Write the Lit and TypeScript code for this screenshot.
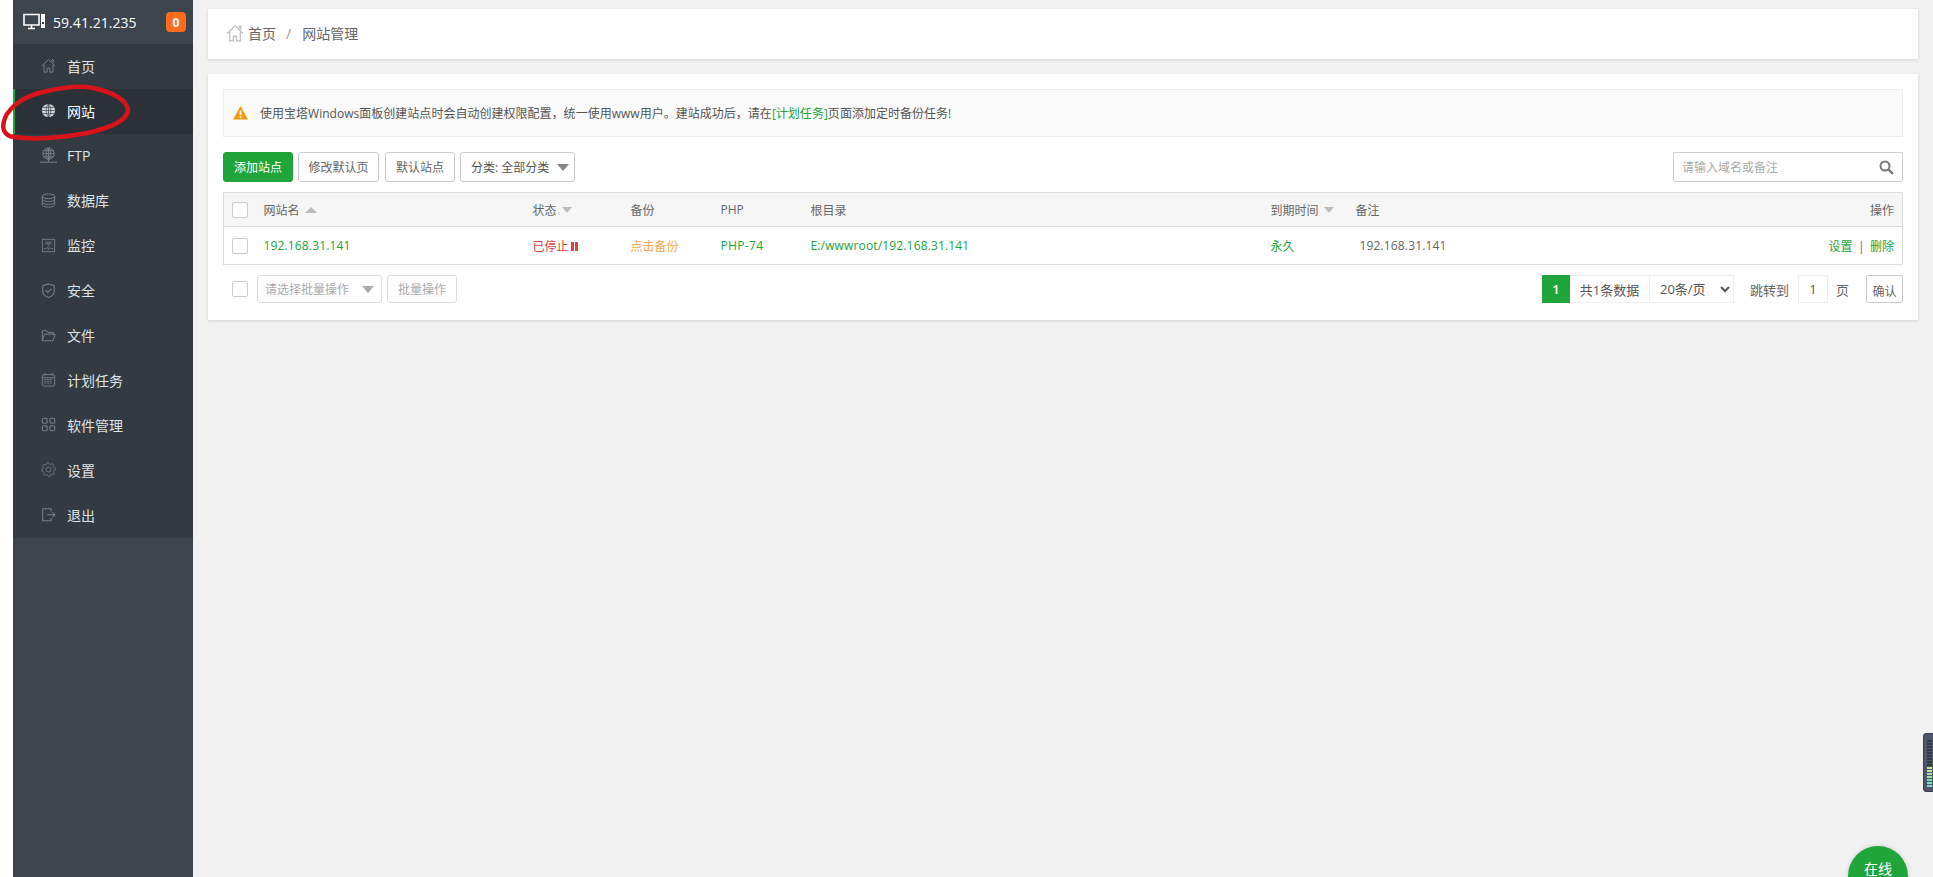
import { LitElement, html, css, svg } from "lit";
import { customElement } from "lit/decorators.js";

const gearPath = (() => {
  const pts: string[] = [];
  const teeth = 8;
  for (let i = 0; i < teeth * 4; i++) {
    const a = (i / (teeth * 4)) * Math.PI * 2 - Math.PI / 16;
    const r = i % 4 < 2 ? 8 : 6.2;
    pts.push(`${(8.5 + r * Math.cos(a)).toFixed(2)} ${(8.5 + r * Math.sin(a)).toFixed(2)}`);
  }
  return "M" + pts.join("L") + "Z";
})();

const icons: Record<string, unknown> = {
  home: svg`<path d="M1 9 8.5 1.8 16 9M3.5 7.5V16H7v-4.5h3V16h3.5V7.5M12.5 4V2H14v3.5" fill="none" stroke="currentColor" stroke-width="1.1"/>`,
  globe: svg`<circle cx="8.5" cy="8.5" r="7.5" fill="#cfd2d6"/><path d="M1 8.5h15M2 5h13M2 12h13M8.5 1v15M8.5 1C5 4 5 13 8.5 16M8.5 1C12 4 12 13 8.5 16" fill="none" stroke="#2c3138" stroke-width=".7"/>`,
  ftp: svg`<circle cx="8.5" cy="6.7" r="5.7" fill="none" stroke="currentColor"/><path d="M3 6.700h11M3.500 3.700h10M3.500 9.700h10M8.500 1v11.400M8.500 1C5.500 3.200 5.500 10.200 8.500 12.400M8.500 1C11.500 3.200 11.500 10.200 8.500 12.400M8.500 12.400v2.400M0 15.200h17" fill="none" stroke="currentColor" stroke-width="1"/>`,
  db: svg`<ellipse cx="8.500" cy="3.700" rx="7" ry="2.700" fill="none" stroke="currentColor" stroke-width="1.100"/><path d="M1.500 3.700v9.600c0 1.500 3.100 2.700 7 2.700s7-1.200 7-2.700V3.700M1.500 7c0 1.500 3.100 2.700 7 2.700s7-1.200 7-2.700M1.500 10.200c0 1.500 3.100 2.700 7 2.700s7-1.200 7-2.700" fill="none" stroke="currentColor" stroke-width="1.100"/>`,
  monitor: svg`<rect x="1.500" y="1.500" width="14" height="14" fill="none" stroke="currentColor"/><path d="M3 12h3l1.200-1.500 1.300 2.500 1.300-2.500 1 1.500h3.200" fill="none" stroke="currentColor" stroke-width=".9"/><rect x="5" y="4" width="7" height="3.500" fill="currentColor" opacity=".55"/><path d="M8.500 7.500v2" stroke="currentColor" stroke-width=".8"/>`,
  shield: svg`<path d="M8.500 1 15 3v6.500c0 3.500-3.500 5.800-6.500 6.800C5.500 15.300 2 13 2 9.500V3Z" fill="none" stroke="currentColor" stroke-width="1.200"/><path d="m5.200 8.200 2.500 2.500 4-4" fill="none" stroke="currentColor" stroke-width="1.200"/>`,
  folder: svg`<path d="M1.500 14.500V3h5l1.500 2h6v2M1.500 14.500 4 7h12l-2.500 7.500Z" fill="none" stroke="currentColor" stroke-width="1.100"/>`,
  calendar: svg`<rect x="1.500" y="3" width="14" height="13" rx="1.500" fill="none" stroke="currentColor" stroke-width="1.100"/><path d="M1.500 6.500h14M4.500 1v3M12.500 1v3" fill="none" stroke="currentColor" stroke-width="1.100"/><path d="M4 8.500h9M4 10.500h9M4 12.500h9" fill="none" stroke="currentColor" stroke-width="1.100" stroke-dasharray="2 1"/>`,
  grid: svg`<g fill="none" stroke="currentColor" stroke-width="1.200"><rect x="1.500" y="1.500" width="5.500" height="5.500" rx="1.200"/><rect x="10" y="1.500" width="5.500" height="5.500" rx="1.200"/><rect x="1.500" y="10" width="5.500" height="5.500" rx="1.200"/><rect x="10" y="10" width="5.500" height="5.500" rx="1.200"/></g>`,
  gear: svg`<circle cx="8.500" cy="8.500" r="2.800" fill="none" stroke="currentColor" stroke-width=".9"/><path d="${gearPath}" fill="none" stroke="currentColor" stroke-width=".9"/>`,
  exit: svg`<path d="M11.500 5V2H2v13.500h9.500v-3M7 8.700h8.500M13 6.200l2.700 2.500L13 11.200" fill="none" stroke="currentColor" stroke-width="1.200"/>`,
};

const menu = [
  ["home", "首页"], ["globe", "网站"], ["ftp", "FTP"], ["db", "数据库"], ["monitor", "监控"], ["shield", "安全"],
  ["folder", "文件"], ["calendar", "计划任务"], ["grid", "软件管理"], ["gear", "设置"], ["exit", "退出"],
];

const meterBars = Array.from({ length: 16 }, (_, i) =>
  i < 9 ? "#333a46" : i < 11 ? "#c6e58a" : i < 13 ? "#a4e6a0" : "#78e0c0");

@customElement("app-root")
export class AppRoot extends LitElement {
  static styles = css`
    :host { display: block; height: 877px; overflow: hidden; position: relative; background: #f1f1f1;
      font-family: "Open Sans", "Noto Sans CJK SC", sans-serif; font-size: 12px; color: #666; }
    * { box-sizing: border-box; }
    .page { display: flex; height: 877px; }
    .strip { width: 13px; background: #fff; flex: none; }
    .side { width: 180px; flex: none; background: #3c444d; display: flex; flex-direction: column; }
    .top { height: 44px; display: flex; align-items: center; padding: 0 7px 0 10px; color: #fff; font-size: 14px; }
    .top svg { margin-right: 8px; flex: none; }
    .top .ip { flex: 1; letter-spacing: .05px; }
    .badge { width: 20px; height: 20px; border-radius: 4px; background: #fb6b20; color: #fff; font-weight: 700;
      font-size: 12px; display: flex; align-items: center; justify-content: center; }
    .menu { background: #333a42; display: flex; flex-direction: column; }
    .item { height: 44.9px; display: flex; align-items: center; padding: 0 0 1.5px 28px; color: #dfe3e7; font-size: 14px; gap: 11px; }
    .item svg { color: #7a7f85; flex: none; }
    .item svg.wide { width: 17px; height: 17px; margin: 0 -1px; }
    .item.on { background: #2c3138; color: #fff; box-shadow: inset 2px 0 0 #20a53a; }
    .main { flex: 1; min-width: 0; padding: 9px 15px 0; }
    .card { background: #fff; box-shadow: 0 1px 3px rgba(0,0,0,.12); }
    .crumb { height: 50px; display: flex; align-items: center; padding: 0 0 2px 18px; font-size: 14px; color: #666; }
    .crumb svg { color: #bbb; margin-right: 4px; }
    .crumb .sep { margin: 0 11px 0 10px; color: #999; }
    .panel { margin-top: 15px; padding: 15px 15px 17px; }
    .alert { height: 48px; background: #fafafa; border: 1px solid #eee; display: flex; align-items: center;
      padding: 0 0 1px 9px; color: #555; gap: 12px; letter-spacing: .02px; }
    .alert a { color: #20a53a; }
    .bar { display: flex; align-items: center; gap: 5px; margin-top: 15px; height: 30px; }
    .btn { height: 100%; padding: 0 10px; border: 1px solid #ccc; border-radius: 3px; display: flex; align-items: center;
      background: #fff; color: #666; white-space: nowrap; }
    .btn.green { background: #20a53a; border-color: #20a53a; color: #fff; width: 70px; justify-content: center; padding: 0; }
    .btn.w2 { width: 81px; justify-content: center; padding: 0; }
    .btn.w3 { width: 70px; justify-content: center; padding: 0; margin-left: 1px; }
    .btn.drop { width: 115px; gap: 8px; padding: 0 0 0 10px; color: #555; }
    .tri { width: 0; height: 0; border-left: 6px solid transparent; border-right: 6px solid transparent; border-top: 7px solid #888; display: inline-block; }
    .tri.up { border-top: 0; border-bottom: 6px solid #bbb; }
    .tri.dn { border-top: 6px solid #bbb; border-left-width: 5.500px; border-right-width: 5.500px; }
    .search { margin-left: auto; width: 230px; height: 100%; border: 1px solid #ccc; border-radius: 2px; display: flex;
      align-items: center; justify-content: space-between; padding: 0 8px; color: #aaa; }
    .search svg { color: #777; }
    table { width: 100%; table-layout: fixed; border-collapse: collapse; margin-top: 10px; border: 1px solid #ddd; }
    th { height: 34px; background: #f6f6f6; font-weight: 400; text-align: left; color: #666; border-bottom: 1px solid #ddd; padding: 0 0 0 10px; }
    th.nt { padding-left: 11px; }
    td { height: 38px; padding: 0 0 0 10px; color: #20a53a; }
    td.latin { letter-spacing: .15px; }
    td.php { letter-spacing: .35px; }
    th.cb, td.cb { padding-left: 8px; }
    th .tri { margin-left: 5px; vertical-align: 2px; }
    .right { float: right; margin-right: 8px; }
    .acts { color: #20a53a; letter-spacing: 0; }
    .acts span { color: #666; margin: 0 5.500px; }
    td.stop { color: #e04040; }
    td.stop i { display: inline-block; width: 3px; height: 9px; background: #e04040; margin-left: 1px; }
    td.stop i:first-of-type { margin-left: 2px; }
    td.bak { color: #f5a64d; }
    td.note { color: #666; padding-left: 15px; }
    .check { width: 16px; height: 16px; border: 1px solid #ccc; border-radius: 2px; background: #fff; display: block; }
    .foot { margin-top: 10px; height: 28px; display: flex; align-items: center; }
    .foot .check { margin: 0 9px; flex: none; }
    .foot .btn { color: #aaa; border-color: #ddd; }
    .batch { width: 125px; padding: 0 7px 0 7px; justify-content: space-between; }
    .foot .btn.bbtn { width: 70px; justify-content: center; padding: 0; margin-left: 5px; }
    .foot .tri { border-top-color: #aaa; }
    .pager { margin-left: auto; display: flex; align-items: center; height: 100%; font-size: 13px; }
    .pg { height: 100%; display: flex; align-items: center; justify-content: center; border: 1px solid #eee; color: #555; }
    .pg.cur { width: 28px; background: #20a53a; border-color: #20a53a; color: #fff; font-weight: 600; }
    .pg.count { width: 80px; border-left: 0; }
    select { width: 84px; height: 100%; border: 1px solid #eee; border-left: 0; background: #fff; color: #555;
      font: inherit; padding: 0 0 0 6px; outline: none; border-radius: 0; }
    .lbl { color: #666; margin: 0 9px 0 16px; }
    .pg.inp { width: 30px; }
    .lbl2 { color: #666; margin: 0 17px 0 8px; }
    .ok { width: 37px; height: 100%; border: 1px solid #ccc; border-radius: 2px; display: flex; align-items: center;
      justify-content: center; padding-top: 3px; color: #666; font-size: 12px; }
    .ring { position: absolute; left: 0; top: 0; pointer-events: none; }
    .meter { position: absolute; left: 1923px; top: 733px; width: 14px; height: 59px; background: #50566a; border: 1px solid #3a3f4c;
      border-radius: 3px; display: flex; flex-direction: column; gap: 1px; padding: 6px 0 0 3px; }
    .meter i { display: block; width: 5px; height: 2px; }
    .online { position: absolute; left: 1848px; top: 846px; width: 60px; height: 60px; border-radius: 50%; background: #20a53a;
      color: #fff; font-size: 14px; text-align: center; padding-top: 13px; line-height: 20px; box-shadow: 0 0 5px rgba(0,0,0,.15); }
  `;

  render() {
    return html`
      <div class="page">
        <div class="strip"></div>
        <aside class="side">
          <div class="top">
            <svg width="22" height="18" viewBox="0 0 22 18"><path d="M1 1.500h15v10.500H1Z" fill="none" stroke="#fff" stroke-width="1.600"/><path d="M5 15.500h7M8.500 12v3" stroke="#fff" stroke-width="1.600"/><rect x="18" y="1" width="4" height="14" fill="#fff"/><rect x="19" y="9" width="2" height="2" fill="#3c444d"/></svg>
            <span class="ip">59.41.21.235</span>
            <span class="badge">0</span>
          </div>
          <nav class="menu">
            ${menu.map(([ic, t], i) => html`<div class="item ${i === 1 ? "on" : ""}"><svg class="${ic === "ftp" ? "wide" : ""}" width="15" height="15" viewBox="0 0 17 17">${icons[ic]}</svg><span>${t}</span></div>`)}
          </nav>
        </aside>
        <main class="main">
          <div class="card crumb">
            <svg width="18" height="18" viewBox="0 0 17 17">${icons.home}</svg><span>首页</span><span class="sep">/</span><span>网站管理</span>
          </div>
          <section class="card panel">
            <div class="alert">
              <svg width="15" height="14" viewBox="0 0 15 14"><path d="M7.500 0 15 13.500H0Z" fill="#f39c12"/><path d="M7.500 4.500v4.500M7.500 10v1.800" stroke="#fff" stroke-width="1.600"/></svg>
              <span>使用宝塔Windows面板创建站点时会自动创建权限配置，统一使用www用户。建站成功后，请在<a>[计划任务]</a>页面添加定时备份任务!</span>
            </div>
            <div class="bar">
              <div class="btn green">添加站点</div>
              <div class="btn w2">修改默认页</div>
              <div class="btn w3">默认站点</div>
              <div class="btn drop">分类: 全部分类 <span class="tri"></span></div>
              <div class="search"><span>请输入域名或备注</span>
                <svg width="15" height="15" viewBox="0 0 15 15"><circle cx="6" cy="6" r="4.500" fill="none" stroke="currentColor" stroke-width="2"/><path d="m9.500 9.500 4.500 4.500" stroke="currentColor" stroke-width="2.400"/></svg>
              </div>
            </div>
            <table>
              <colgroup><col style="width:30px"/><col style="width:269px"/><col style="width:98px"/><col style="width:90px"/><col style="width:90px"/><col style="width:460px"/><col style="width:84px"/><col/></colgroup>
              <thead><tr>
                <th class="cb"><span class="check"></span></th><th>网站名<span class="tri up"></span></th><th>状态<span class="tri dn"></span></th><th>备份</th><th>PHP</th><th>根目录</th><th>到期时间<span class="tri dn"></span></th><th class="nt">备注<span class="right">操作</span></th>
              </tr></thead>
              <tbody><tr>
                <td class="cb"><span class="check"></span></td><td class="latin">192.168.31.141</td><td class="stop">已停止<i></i><i></i></td><td class="bak">点击备份</td><td class="php">PHP-74</td><td class="latin">E:/wwwroot/192.168.31.141</td><td>永久</td>
                <td class="note latin">192.168.31.141<span class="right acts">设置<span>|</span>删除</span></td>
              </tr></tbody>
            </table>
            <div class="foot">
              <span class="check"></span>
              <div class="btn batch">请选择批量操作 <span class="tri"></span></div>
              <div class="btn bbtn">批量操作</div>
              <div class="pager">
                <div class="pg cur">1</div><div class="pg count">共1条数据</div>
                <select><option>20条/页</option></select>
                <span class="lbl">跳转到</span><div class="pg inp">1</div><span class="lbl2">页</span><div class="ok">确认</div>
              </div>
            </div>
          </section>
        </main>
      </div>
      <svg class="ring" width="140" height="150" viewBox="0 0 140 150"><path d="M128 111C128 100 112 92 93 88 78 85 60 88 43 92 25 96 10 106 5 118 1 128 4 136 14 137 35 140 60 138 87 133 105 129 126 122 128 111Z" fill="none" stroke="#d8141a" stroke-width="4.500"/></svg>
      <div class="meter">${meterBars.map((c) => html`<i style="background:${c}"></i>`)}</div>
      <div class="online">在线</div>
    `;
  }
}
